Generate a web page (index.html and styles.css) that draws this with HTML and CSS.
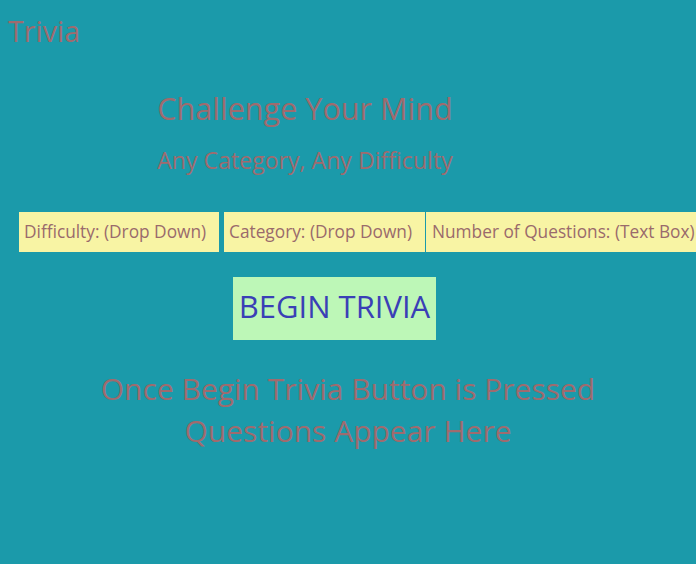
FILE: index.html
```html
<!DOCTYPE html>
<html>
<head>
<meta charset="utf-8">
<link rel="stylesheet" href="styles.css">
</head>
<body>
<header class="brand">Trivia</header>
<section class="hero">
  <h1 class="hero-title">Challenge Your Mind</h1>
  <h2 class="hero-sub">Any Category, Any Difficulty</h2>
</section>
<section class="controls">
  <div class="ctl ctl-diff">Difficulty: (Drop Down)</div>
  <div class="ctl ctl-cat">Category: (Drop Down)</div>
  <div class="ctl ctl-num">Number of Questions: (Text Box)</div>
</section>
<div class="actions">
  <button class="begin">BEGIN TRIVIA</button>
</div>
<section class="questions">
  <p>Once Begin Trivia Button is Pressed<br>Questions Appear Here</p>
</section>
</body>
</html>
```
FILE: styles.css
```css
html, body {
  margin: 0;
  padding: 0;
}
body {
  background: #1b9aaa;
  font-family: "Open Sans", "Noto Sans", sans-serif;
  color: #9f6b6e;
  width: 696px;
  height: 564px;
  overflow: hidden;
}
.brand {
  font-size: 28.6px;
  line-height: 40px;
  padding: 11px 0 0 8px;
}
.hero {
  padding-right: 86px;
  text-align: center;
  margin-top: 37px;
}
.hero-title {
  margin: 0;
  font-weight: normal;
  font-size: 30.6px;
  line-height: 40px;
}
.hero-sub {
  margin: 17px 0 0;
  font-weight: normal;
  font-size: 23.1px;
  line-height: 30px;
}
.controls {
  display: flex;
  margin-top: 37px;
  padding-left: 19px;
  height: 40px;
}
.ctl {
  flex: none;
  background: #f8f4a4;
  color: #9a6a6c;
  font-size: 17.3px;
  line-height: 40px;
  padding-left: 5px;
  box-sizing: border-box;
  white-space: nowrap;
}
.ctl-diff { width: 200px; margin-right: 5px; }
.ctl-cat { width: 202px; border-right: 1px solid #1b9aaa; }
.ctl-num { width: 272px; padding-left: 6px; }
.actions {
  padding-left: 233px;
  margin-top: 25px;
}
.begin {
  width: 203px;
  height: 63px;
  background: #bdf7b7;
  border: none;
  padding: 0 0 6px;
  font-family: inherit;
  font-size: 31px;
  color: #3a3fb6;
}
.questions {
  text-align: center;
  margin-top: 28px;
}
.questions p {
  margin: 0;
  font-size: 30px;
  line-height: 42px;
}
```
